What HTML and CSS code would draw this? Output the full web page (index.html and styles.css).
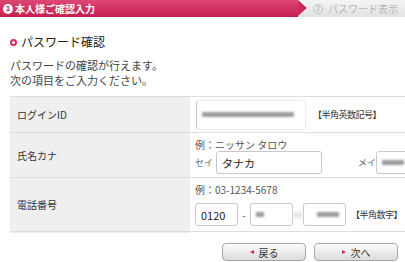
FILE: index.html
```html
<!DOCTYPE html>
<html lang="ja">
<head>
    <meta charset="UTF-8">
    <meta name="viewport" content="width=device-width, initial-scale=1.0">
    <title>パスワード確認</title>
    <link rel="stylesheet" href="styles.css">
</head>
<body>
    <div class="page">
        <div class="steps">
            <div class="step step-current"><span class="step-num">1</span>本人様ご確認入力</div>
            <div class="step step-next"><span class="step-num">2</span>パスワード表示</div>
        </div>

        <div class="content">
            <h2 class="heading"><span class="bullet"></span>パスワード確認</h2>
            <p class="lead">パスワードの確認が行えます。<br>次の項目をご入力ください。</p>

            <table class="form-table">
                <tr class="row-id">
                    <th>ログインID</th>
                    <td>
                        <div class="field-line">
                            <span class="box box-id"><span class="blur blur-long"></span></span>
                            <span class="note">【半角英数記号】</span>
                        </div>
                    </td>
                </tr>
                <tr class="row-kana">
                    <th>氏名カナ</th>
                    <td>
                        <div class="example">例：ニッサン タロウ</div>
                        <div class="field-line">
                            <span class="sub">セイ</span>
                            <span class="box box-name">タナカ</span>
                            <span class="sub sub-mei">メイ</span>
                            <span class="box box-name"><span class="blur blur-short"></span></span>
                        </div>
                    </td>
                </tr>
                <tr class="row-tel">
                    <th>電話番号</th>
                    <td>
                        <div class="example">例：03-1234-5678</div>
                        <div class="field-line">
                            <span class="box box-tel">0120</span>
                            <span class="dash">-</span>
                            <span class="box box-tel"><span class="blur blur-tiny"></span></span>
                            <span class="dash dash-blur"></span>
                            <span class="box box-tel"><span class="blur blur-mid"></span></span>
                            <span class="note">【半角数字】</span>
                        </div>
                    </td>
                </tr>
                <tr class="row-empty">
                    <th></th>
                    <td></td>
                </tr>
            </table>

            <div class="actions">
                <button class="btn btn-back">戻る</button>
                <button class="btn btn-next">次へ</button>
            </div>
        </div>
    </div>
</body>
</html>
```

FILE: styles.css
```css
body {
    margin: 0;
    overflow: hidden;
    background: #fff;
    font-family: "Noto Sans CJK JP", "Noto Sans", sans-serif;
    color: #333;
}

.page {
    width: 620px;
}

/* step bar */
.steps {
    display: flex;
    height: 17px;
    background: linear-gradient(#f4f4f4, #e2e2e2);
}

.step {
    display: flex;
    align-items: center;
    font-size: 10px;
    line-height: 17px;
    white-space: nowrap;
}

.step-current {
    position: relative;
    width: 298px;
    padding-left: 3px;
    box-sizing: border-box;
    color: #fff;
    font-weight: bold;
    background: linear-gradient(#dd4874, #c71d51);
}

.step-current::before {
    content: "";
    position: absolute;
    right: -11px;
    top: 0;
    border-left: 11px solid #fff;
    border-top: 8.5px solid transparent;
    border-bottom: 8.5px solid transparent;
}

.step-current::after {
    content: "";
    position: absolute;
    right: -9px;
    top: 0;
    border-left: 9px solid #cc2a5c;
    border-top: 8.5px solid transparent;
    border-bottom: 8.5px solid transparent;
}

.step-num {
    display: inline-flex;
    align-items: center;
    justify-content: center;
    width: 10px;
    height: 10px;
    border-radius: 50%;
    margin-right: 2px;
    font-size: 8px;
    line-height: 1;
    font-family: "Liberation Sans", sans-serif;
}

.step-current .step-num {
    background: #fff;
    color: #c71d51;
}

.step-next {
    padding-left: 15px;
    color: #b4b4b4;
}

.step-next .step-num {
    border: 1px solid #bcbcbc;
    width: 8px;
    height: 8px;
    margin-right: 5px;
    font-size: 7px;
    color: #aaa;
}

/* content */
.content {
    padding: 0 10px;
}

.heading {
    display: flex;
    align-items: center;
    margin: 17px 0 0 0;
    font-size: 12px;
    font-weight: normal;
    line-height: 16px;
    color: #222;
}

.bullet {
    width: 3px;
    height: 3px;
    border: 2px solid #d22a5c;
    border-radius: 50%;
    margin-right: 4px;
}

.lead {
    margin: 8px 0 0 0;
    font-size: 11px;
    line-height: 15px;
    color: #444;
}

.form-table {
    width: 600px;
    margin-top: 8px;
    border-collapse: collapse;
    font-size: 10px;
}

.form-table th,
.form-table td {
    border-top: 1px solid #dedede;
    vertical-align: middle;
}

.form-table th {
    width: 180px;
    padding: 0 7px;
    background: #efefef;
    font-weight: normal;
    text-align: left;
    color: #333;
    box-sizing: border-box;
}

.form-table td {
    padding: 0 5px;
}

.row-id td {
    height: 35px;
}

.row-kana td {
    height: 42px;
    padding-top: 2px;
}

.row-tel td {
    height: 53px;
}

.row-empty th,
.row-empty td {
    height: 0;
    padding: 0;
}

.example {
    font-size: 10px;
    line-height: 13px;
    color: #555;
}

.row-tel .example {
    margin-bottom: 7px;
}

.field-line {
    display: flex;
    align-items: center;
    white-space: nowrap;
}

.box {
    display: inline-flex;
    align-items: center;
    box-sizing: border-box;
    height: 23px;
    padding: 0 5px;
    background: #fff;
    border: 1px solid #c8c8c8;
    border-radius: 3px;
    font-size: 11px;
    color: #222;
}

.box-id {
    width: 110px;
    height: 30px;
    margin-left: 1px;
    border-color: #ececec;
    border-left-color: #c8c8c8;
}

.box-name {
    width: 106px;
}

.box-tel {
    width: 43px;
}

.note {
    margin-left: 7px;
    font-size: 9px;
    letter-spacing: -0.5px;
    color: #333;
}

.row-tel .note {
    margin-left: 5px;
}

.sub {
    margin-right: 3px;
    font-size: 9px;
    color: #666;
}

.sub-mei {
    margin-left: 36px;
    margin-right: 0;
}

.dash {
    width: 12px;
    text-align: center;
    color: #555;
}

.dash-blur {
    width: 10px;
    height: 6px;
    background: #e8e8e8;
    filter: blur(1px);
}

.blur {
    display: block;
    height: 5px;
    background: #9c9c9c;
    filter: blur(1.2px);
}

.blur-long {
    width: 92px;
}

.blur-short {
    width: 22px;
}

.blur-tiny {
    width: 8px;
}

.blur-mid {
    width: 22px;
    margin-left: 8px;
}

/* buttons */
.actions {
    display: flex;
    justify-content: center;
    gap: 8px;
    margin-top: 11px;
}

.btn {
    display: flex;
    align-items: center;
    justify-content: center;
    width: 84px;
    height: 18px;
    padding: 0;
    font-family: inherit;
    font-size: 10px;
    color: #333;
    border: 1px solid #a8a8a8;
    border-radius: 4px;
    background: linear-gradient(#fdfdfd, #dcdcdc);
    cursor: pointer;
}

.btn::before {
    content: "";
    margin-right: 5px;
    border-top: 2.5px solid transparent;
    border-bottom: 2.5px solid transparent;
}

.btn-back::before {
    border-right: 4px solid #d22a5c;
}

.btn-next::before {
    border-left: 4px solid #d22a5c;
}
```
